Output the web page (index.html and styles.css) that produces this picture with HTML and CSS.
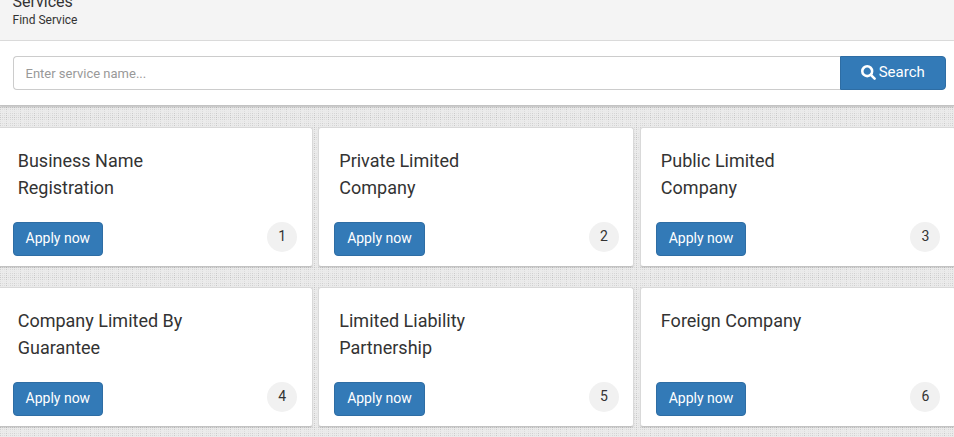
FILE: index.html
```html
<!DOCTYPE html>
<html lang="en">
<head>
<meta charset="utf-8">
<title>Services</title>
<link rel="stylesheet" href="styles.css">
</head>
<body>
<header class="page-header">
  <h1>Services</h1>
  <p>Find Service</p>
</header>
<form class="search-bar">
  <input class="search-input" type="text" placeholder="Enter service name..." aria-label="Service name">
  <button class="search-button" type="button"><svg class="search-icon" viewBox="0 0 14 14" aria-hidden="true"><circle cx="5.8" cy="5.8" r="4.6"/><path d="M9.2 9.2L12.7 12.7"/></svg>Search</button>
</form>
<main class="services">
  <article class="card"><h2>Business Name<br>Registration</h2><div class="card-footer"><button class="apply" type="button">Apply now</button><span class="number">1</span></div></article>
  <article class="card"><h2>Private Limited<br>Company</h2><div class="card-footer"><button class="apply" type="button">Apply now</button><span class="number">2</span></div></article>
  <article class="card"><h2>Public Limited<br>Company</h2><div class="card-footer"><button class="apply" type="button">Apply now</button><span class="number">3</span></div></article>
  <article class="card"><h2>Company Limited By<br>Guarantee</h2><div class="card-footer"><button class="apply" type="button">Apply now</button><span class="number">4</span></div></article>
  <article class="card"><h2>Limited Liability<br>Partnership</h2><div class="card-footer"><button class="apply" type="button">Apply now</button><span class="number">5</span></div></article>
  <article class="card"><h2>Foreign Company</h2><div class="card-footer"><button class="apply" type="button">Apply now</button><span class="number">6</span></div></article>
</main>
</body>
</html>
```
FILE: styles.css
```css
* { box-sizing: border-box; }
html { overflow: hidden; }
body {
  margin: 0;
  height: 437px;
  overflow: hidden;
  color: #333;
  font: 14px/20px Roboto, sans-serif;
  background-color: #ebebeb;
  background-image:
    linear-gradient(90deg, transparent 1px, #ebebeb 1px),
    linear-gradient(#ebebeb 1px, transparent 1px),
    repeating-linear-gradient(rgba(255, 255, 255, .35) 0 2px, transparent 2px 6px, rgba(150, 150, 150, .15) 6px 8px, transparent 8px 10px),
    repeating-linear-gradient(90deg, #d0d0d0 0 2px, #dcdcdc 2px 6px, #cacaca 6px 8px, #e2e2e2 8px 10px, #d6d6d6 10px 14px);
  background-size: 2px 2px, 2px 2px, auto, auto;
}
.page-header {
  height: 41px;
  padding-left: 12.5px;
  overflow: hidden;
  background: #f4f4f4;
  border-bottom: 1px solid #ddd;
}
.page-header h1 {
  margin: -8px 0 0;
  font-size: 16px;
  font-weight: 400;
  line-height: 20px;
}
.page-header p {
  margin: 0;
  font-size: 12px;
  line-height: 16px;
}
.search-bar {
  display: flex;
  height: 65px;
  padding: 15px 8px 16px 13px;
  background: #fff;
  border-bottom: 1px solid #c3c3c3;
  box-shadow: 0 1px 2px rgba(0, 0, 0, .2);
}
.search-input {
  flex: 1;
  min-width: 0;
  height: 34px;
  padding: 0 11.5px;
  border: 1px solid #ccc;
  border-right: 0;
  border-radius: 4px 0 0 4px;
  font: 13px/18px Roboto, sans-serif;
}
.search-input::placeholder { color: #999; opacity: 1; }
.search-button, .apply {
  color: #fff;
  background: #337ab7;
  border: 1px solid #2e6da4;
  font: 14px/20px Roboto, sans-serif;
}
.search-button {
  display: flex;
  align-items: center;
  justify-content: center;
  gap: 3px;
  width: 106px;
  height: 34px;
  padding: 0 0.5px 2px 0;
  border-radius: 0 4px 4px 0;
  font-size: 15px;
}
.search-icon {
  width: 15px;
  height: 15px;
  fill: none;
  stroke: #fff;
  stroke-width: 2.4;
  stroke-linecap: round;
}
.services {
  display: grid;
  grid-template-columns: repeat(3, 315.9px);
  grid-auto-rows: 140px;
  gap: 20px 5.7px;
  width: 960px;
  margin: 21px 0 0 -3.3px;
}
.card {
  display: flex;
  flex-direction: column;
  padding: 19px 14.3px 10px 15px;
  background: #fff;
  border: 1px solid #d9d9d9;
  border-bottom-color: #c3c3c3;
  border-radius: 3px;
  box-shadow: 0 1px 1px rgba(0, 0, 0, .08);
}
.card h2 {
  height: 54px;
  margin: 0 0 21px 5px;
  font-size: 18px;
  font-weight: 400;
  line-height: 27px;
}
.card-footer {
  display: flex;
  justify-content: space-between;
  height: 34px;
}
.apply {
  width: 90.3px;
  height: 34px;
  padding: 0 0 2px;
  border-radius: 4px;
}
.number {
  width: 30px;
  height: 30px;
  border-radius: 50%;
  background: #f1f1f1;
  line-height: 29px;
  text-align: center;
}
```
